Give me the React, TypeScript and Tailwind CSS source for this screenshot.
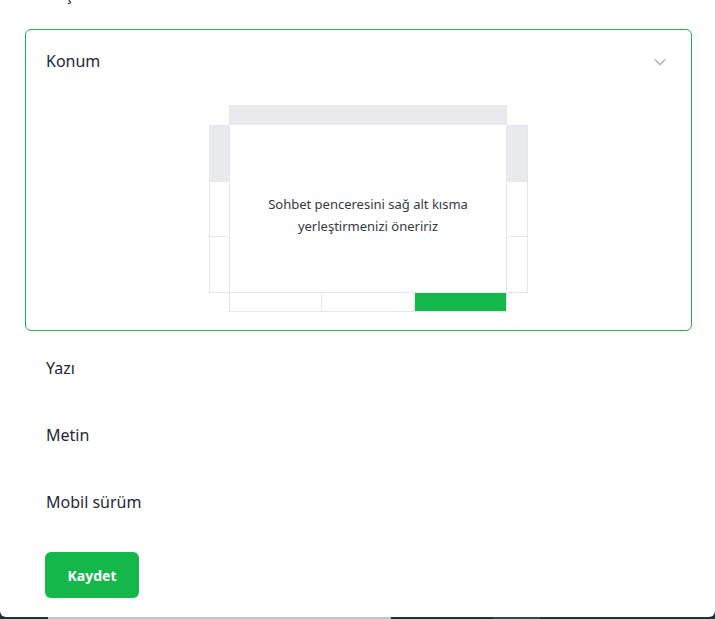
import React from "react";

function Chevron() {
  return (
    <svg width="16" height="16" viewBox="0 0 24 24" fill="none" stroke="#9ca3af" strokeWidth="1.8" strokeLinecap="round" strokeLinejoin="round">
      <path d="M5 9l7 7 7-7" />
    </svg>
  );
}

function Illustration() {
  return (
    <div className="relative ml-[183px] w-[319px] h-[207px]">
      {/* back panel */}
      <div className="absolute left-0 top-[20px] w-[319px] h-[168px] border border-[#e6e7ea] bg-white flex flex-col">
        <div className="h-[56px] bg-[#e9eaee]" />
        <div className="h-[55px] border-b border-[#e6e7ea]" />
      </div>
      {/* bottom row */}
      <div className="absolute left-[20px] top-[187px] w-[278px] h-[20px] flex border border-[#e6e7ea] bg-white">
        <div className="w-[92px] border-r border-[#e6e7ea]" />
        <div className="w-[93px] border-r border-[#e6e7ea]" />
        <div className="flex-1 bg-[#13b74a]" />
      </div>
      {/* front window */}
      <div className="absolute left-[20px] top-0 w-[278px] h-[188px] bg-white border-x border-b border-[#e6e7ea] flex flex-col">
        <div className="h-[20px] bg-[#e9eaee]" />
        <div className="flex-1 flex items-center justify-center pt-[12px]">
          <p className="text-[13px] leading-[22px] text-[#333a44] text-center">
            Sohbet penceresini sağ alt kısma
            <br />
            yerleştirmenizi öneririz
          </p>
        </div>
      </div>
    </div>
  );
}

export default function App() {
  return (
    <div className="w-[715px] h-[619px] bg-[#262d33] overflow-hidden relative" style={{ fontFamily: '"Noto Sans", "Open Sans", sans-serif' }}>
      <div className="absolute left-0 right-0 bottom-0 h-[2px] flex">
        <div className="w-[48px] bg-[#262d33]" />
        <div className="w-[343px] bg-[#c4c4c4]" />
        <div className="w-[102px] bg-[#262d33]" />
        <div className="w-[47px] bg-[#3b4750]" />
        <div className="flex-1 bg-[#262d33]" />
      </div>
      <div className="h-[617px] bg-white rounded-b-[6px] pl-[25px] pr-[23px] overflow-hidden">
        <div className="h-[29px] overflow-hidden relative">
          <div className="absolute left-[21px] top-[-18px] text-[16px] leading-[24px] text-[#1f2937]">Başlık</div>
        </div>
        <div className="border border-[#22b24c] rounded-[6px]">
          <div className="flex items-center justify-between px-5 pt-[19px] pb-[13px]">
            <span className="text-[16px] leading-[24px] text-[#1f2937]">Konum</span>
            <span className="mr-[3px] mt-[1px]"><Chevron /></span>
          </div>
          <div className="pt-[19px] pb-[18px]">
            <Illustration />
          </div>
        </div>
        <div className="pl-[21px]">
          <div className="pt-[25px] h-[67px] text-[16px] leading-[24px] text-[#1f2937]">Yazı</div>
          <div className="pt-[25px] h-[67px] text-[16px] leading-[24px] text-[#1f2937]">Metin</div>
          <div className="pt-[25px] h-[67px] text-[16px] leading-[24px] text-[#1f2937]">Mobil sürüm</div>
        </div>
        <div className="pl-[20px] pt-[20px]">
          <button className="w-[94px] h-[46px] rounded-[6px] bg-[#13b74a] text-white font-bold text-[14px]">Kaydet</button>
        </div>
      </div>
    </div>
  );
}
